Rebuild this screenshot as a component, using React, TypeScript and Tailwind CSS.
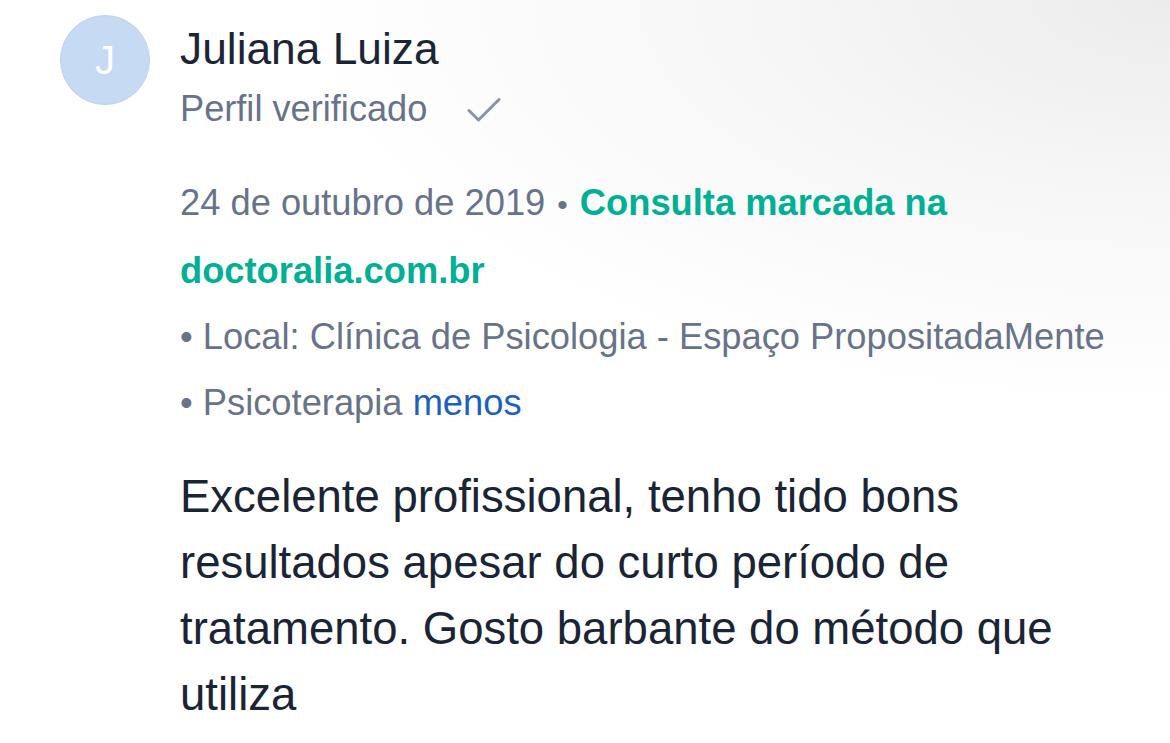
import React from "react";

export default function App() {
  return (
    <div
      className="w-[1170px] h-[743px] overflow-hidden bg-white bg-[radial-gradient(ellipse_75%_55%_at_100%_0%,#ececec_0%,#f6f6f6_45%,#ffffff_100%)]"
      style={{ fontFamily: '"Liberation Sans", Arial, sans-serif' }}
    >
      <div className="flex pl-[60px] pt-[15px]">
        <div className="w-[90px] h-[90px] shrink-0 rounded-full bg-[#c6daf4] border border-[#bcd2ef] flex items-center justify-center">
          <span className="text-white text-[40px] leading-none">J</span>
        </div>
        <div className="ml-[30px] w-[950px] pt-[7px]">
          <div className="text-[44.3px] leading-[54px] text-[#1c2535]">Juliana Luiza</div>
          <div className="flex items-center text-[36.2px] leading-[66px] text-[#68738a]">
            <span>Perfil verificado</span>
            <svg
              className="ml-[40px] mt-[2px]"
              width="34"
              height="26"
              viewBox="0 0 34 26"
              fill="none"
              stroke="#8a93a2"
              strokeWidth="3"
              strokeLinecap="round"
              strokeLinejoin="round"
            >
              <path d="M2 13.5 L11.5 23 L32 2.5" />
            </svg>
          </div>
          <div className="mt-[28px] text-[36.3px] leading-[66px] text-[#68738a]">
            <div>
              24 de outubro de 2019<span className="mx-[12px] text-[30px]">•</span>
              <span className="font-bold text-[#00b094]">Consulta marcada na doctoralia.com.br</span>
            </div>
            <div>• Local: Clínica de Psicologia - Espaço PropositadaMente</div>
            <div>
              • Psicoterapia <span className="text-[#1d60c0]">menos</span>
            </div>
          </div>
          <p className="mt-[28px] text-[45.5px] leading-[66px] text-[#1b2434]">
            Excelente profissional, tenho tido bons resultados apesar do curto período de tratamento. Gosto barbante do método que utiliza
          </p>
        </div>
      </div>
    </div>
  );
}
